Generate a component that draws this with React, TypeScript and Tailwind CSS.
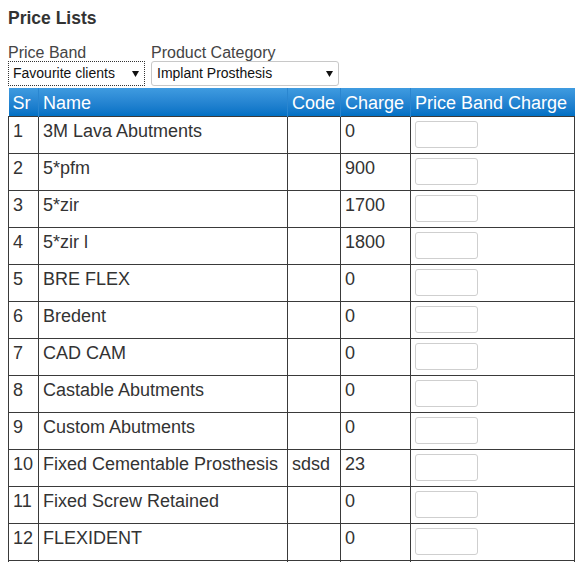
const rows = [
  { sr: 1, name: "3M Lava Abutments", code: "", charge: "0" },
  { sr: 2, name: "5*pfm", code: "", charge: "900" },
  { sr: 3, name: "5*zir", code: "", charge: "1700" },
  { sr: 4, name: "5*zir l", code: "", charge: "1800" },
  { sr: 5, name: "BRE FLEX", code: "", charge: "0" },
  { sr: 6, name: "Bredent", code: "", charge: "0" },
  { sr: 7, name: "CAD CAM", code: "", charge: "0" },
  { sr: 8, name: "Castable Abutments", code: "", charge: "0" },
  { sr: 9, name: "Custom Abutments", code: "", charge: "0" },
  { sr: 10, name: "Fixed Cementable Prosthesis", code: "sdsd", charge: "23" },
  { sr: 11, name: "Fixed Screw Retained", code: "", charge: "0" },
  { sr: 12, name: "FLEXIDENT", code: "", charge: "0" },
  { sr: 13, name: "Full Contour Zirconia", code: "", charge: "0" },
];

const Arrow = () => (
  <svg
    width="7"
    height="6"
    viewBox="0 0 7 6"
    className="absolute right-[5px] top-1/2 -translate-y-1/2"
  >
    <polygon points="0,0 7,0 3.5,6" fill="#111" />
  </svg>
);

const App = () => {
  return (
    <main className="min-h-screen bg-white px-2 pt-2 font-['Liberation_Sans',Arial,sans-serif] text-[#333]">
      <h1 className="mb-[16px] text-[17.5px] font-bold leading-[20px]">Price Lists</h1>

      <div className="flex gap-[6px]">
        <div className="flex flex-col">
          <label className="text-[16px] leading-[17px] text-[#444]">Price Band</label>
          <div className="relative flex h-[25px] w-[137px] items-center border border-dotted border-[#333] bg-white pl-1 text-[14px] text-[#111]">
            Favourite clients
            <Arrow />
          </div>
        </div>
        <div className="flex flex-col">
          <label className="text-[16px] leading-[17px] text-[#444]">Product Category</label>
          <div className="relative flex h-[25px] w-[188px] items-center rounded-[3px] border border-[#c8c8c8] bg-white pl-[5px] text-[14px] text-[#111]">
            Implant Prosthesis
            <Arrow />
          </div>
        </div>
      </div>

      <table className="mt-[2px] w-[566px] table-fixed border-collapse text-[18px] leading-[20px]">
        <colgroup>
          <col className="w-[30px]" />
          <col className="w-[249px]" />
          <col className="w-[53px]" />
          <col className="w-[70px]" />
          <col className="w-[164px]" />
        </colgroup>
        <thead>
          <tr className="h-[28px] bg-gradient-to-b from-[#3f9be0] to-[#0070c4] text-left text-white">
            <th className="border-r border-[#2a86d0] px-[4px] pt-[3px] font-normal">Sr</th>
            <th className="border-r border-[#2a86d0] px-[4px] pt-[3px] font-normal">Name</th>
            <th className="border-r border-[#2a86d0] px-[4px] pt-[3px] font-normal">Code</th>
            <th className="border-r border-[#2a86d0] px-[4px] pt-[3px] font-normal">Charge</th>
            <th className="whitespace-nowrap px-[4px] pt-[3px] font-normal">Price Band Charge</th>
          </tr>
        </thead>
        <tbody>
          {rows.map((r) => (
            <tr key={r.sr} className="h-[37px]">
              <td className="border border-[#3a3a3a] px-[4px] pt-[4px] align-top">{r.sr}</td>
              <td className="whitespace-nowrap border border-[#3a3a3a] px-[4px] pt-[4px] align-top">{r.name}</td>
              <td className="border border-[#3a3a3a] px-[4px] pt-[4px] align-top">{r.code}</td>
              <td className="border border-[#3a3a3a] px-[4px] pt-[4px] align-top">{r.charge}</td>
              <td className="border border-[#3a3a3a] px-[4px] py-[4px] align-top">
                <input
                  type="text"
                  className="block h-[27px] w-[63px] rounded-[3px] border border-[#cfcfcf] bg-white"
                />
              </td>
            </tr>
          ))}
        </tbody>
      </table>
    </main>
  );
};

export default App;
